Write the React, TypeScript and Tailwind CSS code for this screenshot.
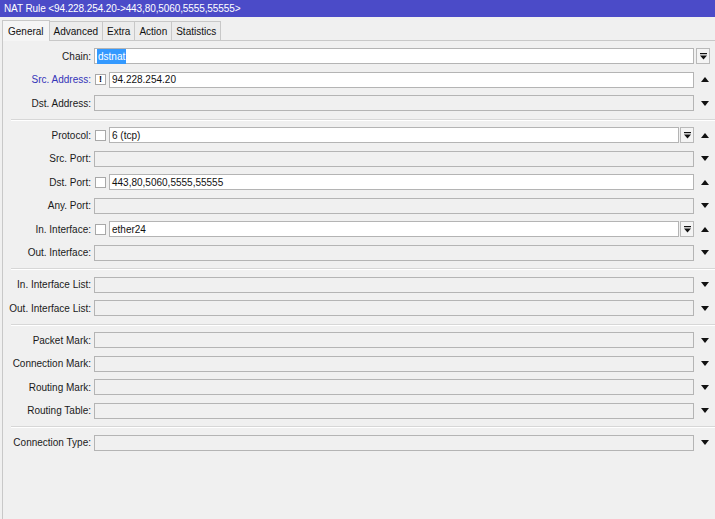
import React from "react";

type Mark = "none" | "empty" | "bang";

type RowProps = {
  label: string;
  blue?: boolean;
  mark?: Mark;
  value?: string;
  selected?: boolean;
  button?: boolean;
  arrow?: "up" | "down" | "none";
  chainButton?: boolean;
};

function DropButton() {
  return (
    <div className="w-[14px] h-[16px] border border-[#b9b9b9] bg-[#f4f4f4] flex items-center justify-center">
      <svg width="7" height="7" viewBox="0 0 7 7">
        <rect x="0" y="0" width="7" height="1.2" fill="#111" />
        <polygon points="0,2.5 7,2.5 3.5,6.5" fill="#111" />
      </svg>
    </div>
  );
}

function Arrow({ dir }: { dir: "up" | "down" }) {
  return (
    <svg width="8" height="5" viewBox="0 0 8 5">
      {dir === "down" ? (
        <polygon points="0,0 8,0 4,5" fill="#111" />
      ) : (
        <polygon points="0,5 8,5 4,0" fill="#111" />
      )}
    </svg>
  );
}

function Row({
  label,
  blue,
  mark = "none",
  value,
  selected,
  button,
  arrow = "down",
  chainButton,
}: RowProps) {
  const filled = value !== undefined;
  return (
    <div className="flex items-center h-[16px]">
      <div
        className={`w-[88px] shrink-0 text-right whitespace-nowrap ${
          blue ? "text-[#3434b8]" : "text-[#1a1a1a]"
        }`}
      >
        {label}
      </div>
      <div className="w-[3px] shrink-0" />
      {mark !== "none" && (
        <div className="w-[11px] h-[11px] mr-[3px] ml-[1px] shrink-0 border border-[#a8a8a8] bg-white flex items-center justify-center text-[9px] font-bold leading-none text-black">
          {mark === "bang" ? "!" : ""}
        </div>
      )}
      <div
        className={`flex-1 h-[16px] border border-[#b4b4b4] flex items-center px-[2px] ${
          filled ? "bg-white" : "bg-[#f0f0f0]"
        }`}
      >
        {filled &&
          (selected ? (
            <span className="bg-[#3399ff] text-white px-[1px]">{value}</span>
          ) : (
            <span className="text-[#111]">{value}</span>
          ))}
      </div>
      {chainButton ? (
        <div className="w-[21px] shrink-0 flex items-center pl-[2px]">
          <DropButton />
        </div>
      ) : (
        <>
          {button && (
            <div className="shrink-0 ml-[1px]">
              <DropButton />
            </div>
          )}
          <div className="w-[21px] shrink-0 flex items-center justify-center">
            {arrow !== "none" && <Arrow dir={arrow} />}
          </div>
        </>
      )}
    </div>
  );
}

function Sep() {
  return <div className="ml-[8px] h-[1px] bg-[#d7d7d7] shadow-[0_1px_0_#ffffff]" />;
}

export default function App() {
  const tabs = ["General", "Advanced", "Extra", "Action", "Statistics"];
  return (
    <div
      className="w-[715px] h-[519px] bg-[#f0f0f0] text-[10px] flex flex-col overflow-hidden"
      style={{ fontFamily: '"Liberation Sans", Arial, sans-serif' }}
    >
      <div className="h-[17px] bg-[#4b4bc8] text-white flex items-center pl-[4px] shrink-0 tracking-[-0.1px]">
        NAT Rule &lt;94.228.254.20-&gt;443,80,5060,5555,55555&gt;
      </div>
      <div className="flex items-end h-[23px] pl-[2px] shrink-0">
        {tabs.map((t, i) => (
          <div
            key={t}
            className={
              i === 0
                ? "h-[21px] px-[5px] flex items-center border border-b-0 border-[#c8c8c8] bg-[#f5f5f5] text-[#111] -mb-[1px] relative z-10"
                : "h-[19px] px-[4px] flex items-center border border-l-0 border-b-0 border-[#c8c8c8] bg-[#ececec] text-[#111]"
            }
          >
            {t}
          </div>
        ))}
      </div>
      <div className="flex-1 ml-[2px] border-l border-t border-[#c8c8c8] bg-[#f0f0f0] pt-[7px] flex flex-col gap-[7.5px]">
        <Row label="Chain:" value="dstnat" selected chainButton arrow="none" />
        <Row label="Src. Address:" blue mark="bang" value="94.228.254.20" arrow="up" />
        <Row label="Dst. Address:" />
        <Sep />
        <Row label="Protocol:" mark="empty" value="6 (tcp)" button arrow="up" />
        <Row label="Src. Port:" />
        <Row label="Dst. Port:" mark="empty" value="443,80,5060,5555,55555" arrow="up" />
        <Row label="Any. Port:" />
        <Row label="In. Interface:" mark="empty" value="ether24" button arrow="up" />
        <Row label="Out. Interface:" />
        <Sep />
        <Row label="In. Interface List:" />
        <Row label="Out. Interface List:" />
        <Sep />
        <Row label="Packet Mark:" />
        <Row label="Connection Mark:" />
        <Row label="Routing Mark:" />
        <Row label="Routing Table:" />
        <Sep />
        <Row label="Connection Type:" />
      </div>
    </div>
  );
}
